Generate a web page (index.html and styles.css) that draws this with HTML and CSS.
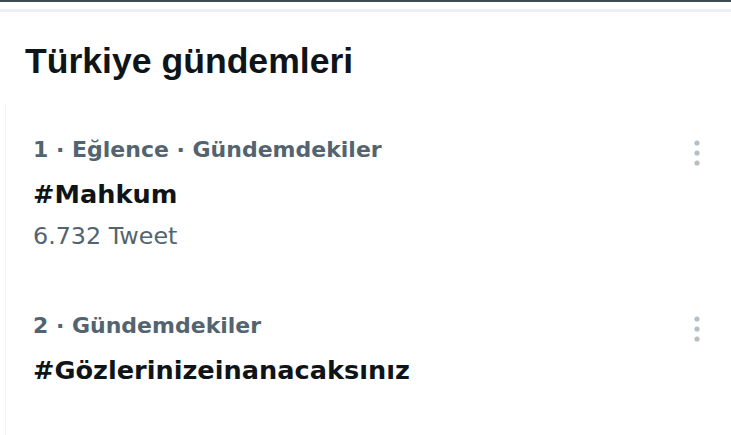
FILE: index.html
```html
<!DOCTYPE html>
<html lang="tr">
<head>
<meta charset="utf-8">
<title>Türkiye gündemleri</title>
<link rel="stylesheet" href="styles.css">
</head>
<body>
<div class="topbar"></div>
<div class="divider"></div>
<section class="panel">
  <h2 class="title">Türkiye gündemleri</h2>
  <div class="trends">
    <div class="trend">
      <div class="trend-body">
        <div class="meta">1 · Eğlence · Gündemdekiler</div>
        <div class="tag">#Mahkum</div>
        <div class="count">6.732 Tweet</div>
      </div>
      <svg class="more" width="6" height="26" viewBox="0 0 6 26"><circle cx="3" cy="3" r="2.6"/><circle cx="3" cy="13" r="2.6"/><circle cx="3" cy="23" r="2.6"/></svg>
    </div>
    <div class="trend">
      <div class="trend-body">
        <div class="meta">2 · Gündemdekiler</div>
        <div class="tag">#Gözlerinizeinanacaksınız</div>
      </div>
      <svg class="more" width="6" height="26" viewBox="0 0 6 26"><circle cx="3" cy="3" r="2.6"/><circle cx="3" cy="13" r="2.6"/><circle cx="3" cy="23" r="2.6"/></svg>
    </div>
  </div>
</section>
</body>
</html>
```
FILE: styles.css
```css
html, body {
  margin: 0;
  padding: 0;
  background: #ffffff;
  font-family: "DejaVu Sans", "Liberation Sans", sans-serif;
  color: #0f1419;
}
.topbar {
  height: 2px;
  background: #3e4a52;
}
.divider {
  margin-top: 7px;
  height: 3px;
  background: #edf0f2;
}
.panel {
  display: flex;
  flex-direction: column;
}
.title {
  margin: 27px 0 0 25px;
  font-family: "Liberation Sans", Arial, sans-serif;
  font-size: 35.6px;
  line-height: 44px;
  font-weight: 700;
  color: #0f1419;
}
.trends {
  margin: 20px 0 0 5px;
  padding-bottom: 40px;
  border-left: 1px solid #f3f5f6;
}
.trend {
  display: flex;
  align-items: flex-start;
  justify-content: space-between;
  padding: 24px 31px 23px 27px;
}
.trend-body {
  display: flex;
  flex-direction: column;
}
.meta {
  font-size: 22px;
  line-height: 45px;
  font-weight: 700;
  color: #536471;
}
.tag {
  font-size: 25.6px;
  line-height: 44px;
  font-weight: 700;
  color: #0f1419;
}
.count {
  font-size: 23.8px;
  line-height: 40px;
  font-weight: 400;
  color: #536471;
}
.more {
  margin-top: 13px;
  fill: #b7bfc6;
}
```
